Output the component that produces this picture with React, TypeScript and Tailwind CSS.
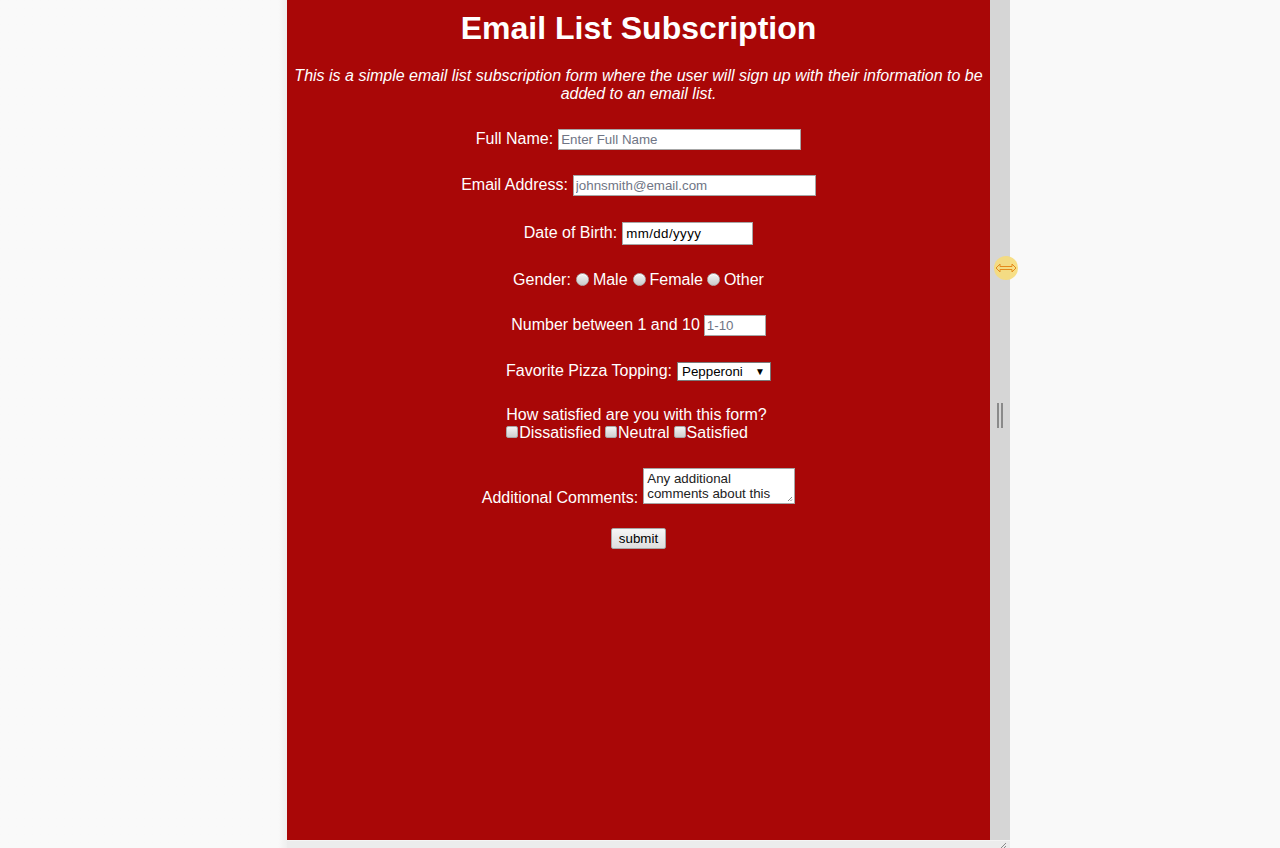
import React from 'react'

const font = "font-['Liberation_Sans',Arial,sans-serif]"

function Radio() {
  return (
    <span className="inline-block w-[13px] h-[13px] rounded-full border border-[#b3b3b3] bg-linear-to-b from-[#f4f4f4] to-[#cbcbcb] shadow-[inset_0_1px_0_#fff]" />
  )
}

function Check() {
  return (
    <span className="inline-block w-[12px] h-[12px] rounded-[2px] border border-[#a8a8a8] bg-linear-to-b from-[#f4f4f4] to-[#d0d0d0] -mt-[3px]" />
  )
}

export default function App() {
  const field = 'bg-white border border-[#a6a6a6] text-[13.33px] text-black px-[2px] outline-none placeholder:text-[#6f7585]'

  return (
    <div className={`w-full h-[848px] bg-[#f9f9f9] flex ${font}`}>
      <div className="w-[287px] shrink-0 bg-linear-to-r from-[#f9f9f9] from-[97%] to-[#efefef]" />
      <div className="w-[723px] flex flex-col">
        <div className="flex h-[840px]">
          <div className="w-[703px] bg-[#a90707] text-white text-center text-[16px]">
            <h1 className="pt-[10px] text-[32px] leading-[37px] font-bold">Email List Subscription</h1>
            <p className="mt-[20px] italic leading-[18.4px] whitespace-nowrap">
              This is a simple email list subscription form where the user will sign up with their information to be
              <br />
              added to an email list.
            </p>

            <div className="mt-[25px] h-[21px] flex items-center justify-center">
              <span>Full Name:</span>
              <input className={`${field} ml-[5px] w-[243px] h-[21px]`} placeholder="Enter Full Name" />
            </div>

            <div className="mt-[25px] h-[21px] flex items-center justify-center">
              <span>Email Address:</span>
              <input className={`${field} ml-[5px] w-[243px] h-[21px]`} placeholder="johnsmith@email.com" />
            </div>

            <div className="mt-[26px] h-[23px] flex items-center justify-center">
              <span>Date of Birth:</span>
              <div className="ml-[5px] w-[131px] h-[23px] bg-white border border-[#a6a6a6] text-black text-[13.33px] leading-[21px] tracking-[0.4px] text-left pl-[3px]">
                mm/dd/yyyy
              </div>
            </div>

            <div className="mt-[25px] h-[21px] flex items-center justify-center">
              <span>Gender:</span>
              <span className="ml-[5px] -mt-[2px] flex"><Radio /></span>
              <span className="ml-[4px]">Male</span>
              <span className="ml-[5px] -mt-[2px] flex"><Radio /></span>
              <span className="ml-[4px]">Female</span>
              <span className="ml-[4px] -mt-[2px] flex"><Radio /></span>
              <span className="ml-[4px]">Other</span>
            </div>

            <div className="mt-[24px] h-[21px] flex items-center justify-center">
              <span>Number between 1 and 10</span>
              <input className={`${field} ml-[4px] w-[62px] h-[21px]`} placeholder="1-10" />
            </div>

            <div className="mt-[26px] h-[19px] flex items-center justify-center">
              <span>Favorite Pizza Topping:</span>
              <div className="ml-[5px] w-[94px] h-[19px] bg-white border border-[#7a7a7a] text-black text-[13.33px] leading-[17px] flex items-center justify-between pl-[4px] pr-[5px]">
                <span>Pepperoni</span>
                <span className="text-[10px]">▼</span>
              </div>
            </div>

            <div className="mt-[25px] flex justify-center">
              <div className="text-left leading-[18.4px] -ml-[4px]">
                <div>How satisfied are you with this form?</div>
                <div className="flex items-center">
                  <Check />
                  <span className="ml-[1px]">Dissatisfied</span>
                  <span className="ml-[4px] flex"><Check /></span>
                  <span className="ml-[1px]">Neutral</span>
                  <span className="ml-[4px] flex"><Check /></span>
                  <span className="ml-[1px]">Satisfied</span>
                </div>
              </div>
            </div>

            <div className="mt-[25px] flex items-end justify-center">
              <span className="mb-[-6px]">Additional Comments:</span>
              <div className="relative ml-[5px] w-[152px] h-[36px] bg-white border border-[#a6a6a6] text-[#222] text-[13.33px] leading-[15px] text-left pl-[3px] pt-[2px] overflow-hidden">
                Any additional
                <br />
                comments about this
                <svg className="absolute right-[1px] bottom-[1px]" width="6" height="6" viewBox="0 0 6 6">
                  <path d="M5 1 L1 5 M5 3.5 L3.5 5" stroke="#888" strokeWidth="1" />
                </svg>
              </div>
            </div>

            <div className="mt-[24px] flex justify-center">
              <div className="w-[55px] h-[21px] border border-[#a6a6a6] rounded-[2px] bg-linear-to-b from-[#f6f6f6] to-[#dedede] text-black text-[13.33px] leading-[19px]">
                submit
              </div>
            </div>
          </div>

          <div className="relative w-[20px] bg-[#d6d6d6]">
            <div className="absolute left-[4px] top-[256px] w-[24px] h-[24px] rounded-full bg-[#f6dc7a]/90 flex items-center justify-center">
              <svg width="22" height="10" viewBox="0 0 22 10">
                <path
                  d="M1 5 L5 1 L5 3.5 L17 3.5 L17 1 L21 5 L17 9 L17 6.5 L5 6.5 L5 9 Z"
                  fill="none"
                  stroke="#e48a1c"
                  strokeWidth="1"
                  strokeLinejoin="miter"
                />
              </svg>
            </div>
            <div className="absolute left-[7px] top-[403px] flex gap-[2px]">
              <span className="w-[2px] h-[25px] bg-[#8a8a8a]" />
              <span className="w-[2px] h-[25px] bg-[#8a8a8a]" />
            </div>
          </div>
        </div>
        <div className="relative h-[8px] bg-[#ececec] border-t border-[#f4f4f4]">
          <svg className="absolute right-[3px] bottom-0" width="8" height="6" viewBox="0 0 8 6">
            <path d="M7 1 L2 6 M7 4 L5 6" stroke="#8a8a8a" strokeWidth="1" />
          </svg>
        </div>
      </div>
    </div>
  )
}
